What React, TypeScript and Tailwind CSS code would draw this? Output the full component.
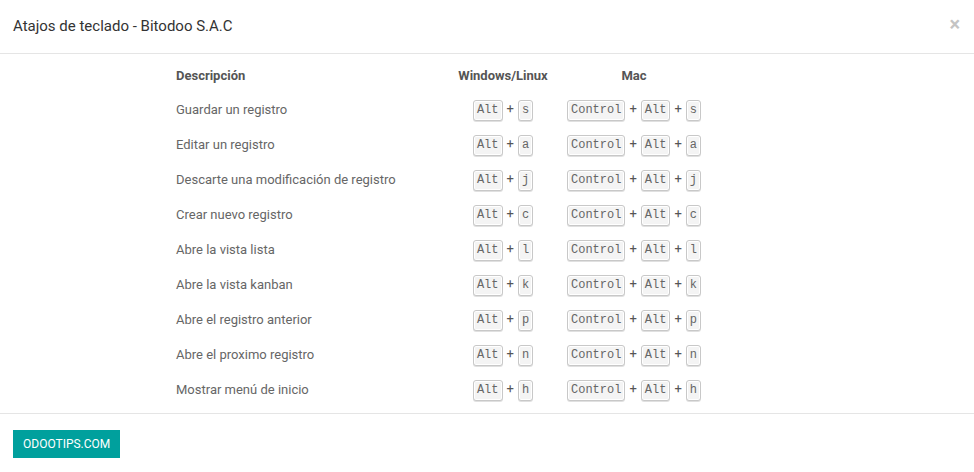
const shortcuts = [
  { label: "Guardar un registro", key: "s" },
  { label: "Editar un registro", key: "a" },
  { label: "Descarte una modificación de registro", key: "j" },
  { label: "Crear nuevo registro", key: "c" },
  { label: "Abre la vista lista", key: "l" },
  { label: "Abre la vista kanban", key: "k" },
  { label: "Abre el registro anterior", key: "p" },
  { label: "Abre el proximo registro", key: "n" },
  { label: "Mostrar menú de inicio", key: "h" },
];

const Kbd = ({ children }: { children: string }) => (
  <kbd className="inline-block h-[21px] px-[3px] leading-[19px] rounded-[3px] border border-[#c8c8c8] bg-[#f4f4f4] text-[#666] text-[12px] font-['Liberation_Mono',monospace] shadow-[0_1px_0_rgba(0,0,0,0.12),inset_0_0_0_1px_#fff]">
    {children}
  </kbd>
);

const Plus = () => <span className="mx-[4px] text-[#555]">+</span>;

export default function App() {
  return (
    <div className="w-[974px] h-[472px] bg-white font-['Roboto',sans-serif] text-[13px] text-[#666] flex flex-col">
      {/* Header */}
      <div className="h-[54px] flex items-center justify-between pl-[13px] pr-[14px] border-b border-[#e5e5e5]">
        <h4 className="text-[15px] text-[#333] font-normal">Atajos de teclado - Bitodoo S.A.C</h4>
        <span className="text-[20px] font-bold text-[#c4c4c4] leading-none -mt-[6px]">×</span>
      </div>

      {/* Body */}
      <div className="flex-1 pl-[168px] pt-[5px] border-b border-[#e5e5e5]">
        <table className="border-collapse table-fixed w-[544px]">
          <colgroup>
            <col className="w-[282px]" />
            <col className="w-[106px]" />
            <col className="w-[156px]" />
          </colgroup>
          <thead>
            <tr className="h-[33px]">
              <th className="px-2 text-left font-bold text-[#555]">Descripción</th>
              <th className="px-0 text-center font-bold text-[#555]">Windows/Linux</th>
              <th className="px-0 text-center font-bold text-[#555]">Mac</th>
            </tr>
          </thead>
          <tbody>
            {shortcuts.map((s) => (
              <tr key={s.label} className="h-[35px]">
                <td className="px-2">{s.label}</td>
                <td className="text-center whitespace-nowrap">
                  <Kbd>Alt</Kbd>
                  <Plus />
                  <Kbd>{s.key}</Kbd>
                </td>
                <td className="text-center whitespace-nowrap">
                  <Kbd>Control</Kbd>
                  <Plus />
                  <Kbd>Alt</Kbd>
                  <Plus />
                  <Kbd>{s.key}</Kbd>
                </td>
              </tr>
            ))}
          </tbody>
        </table>
      </div>

      {/* Footer */}
      <div className="h-[58px] pl-[13px] pt-[16px]">
        <button className="h-[28px] px-[10px] bg-[#00a09d] text-white text-[12px] uppercase">
          odootips.com
        </button>
      </div>
    </div>
  );
}
